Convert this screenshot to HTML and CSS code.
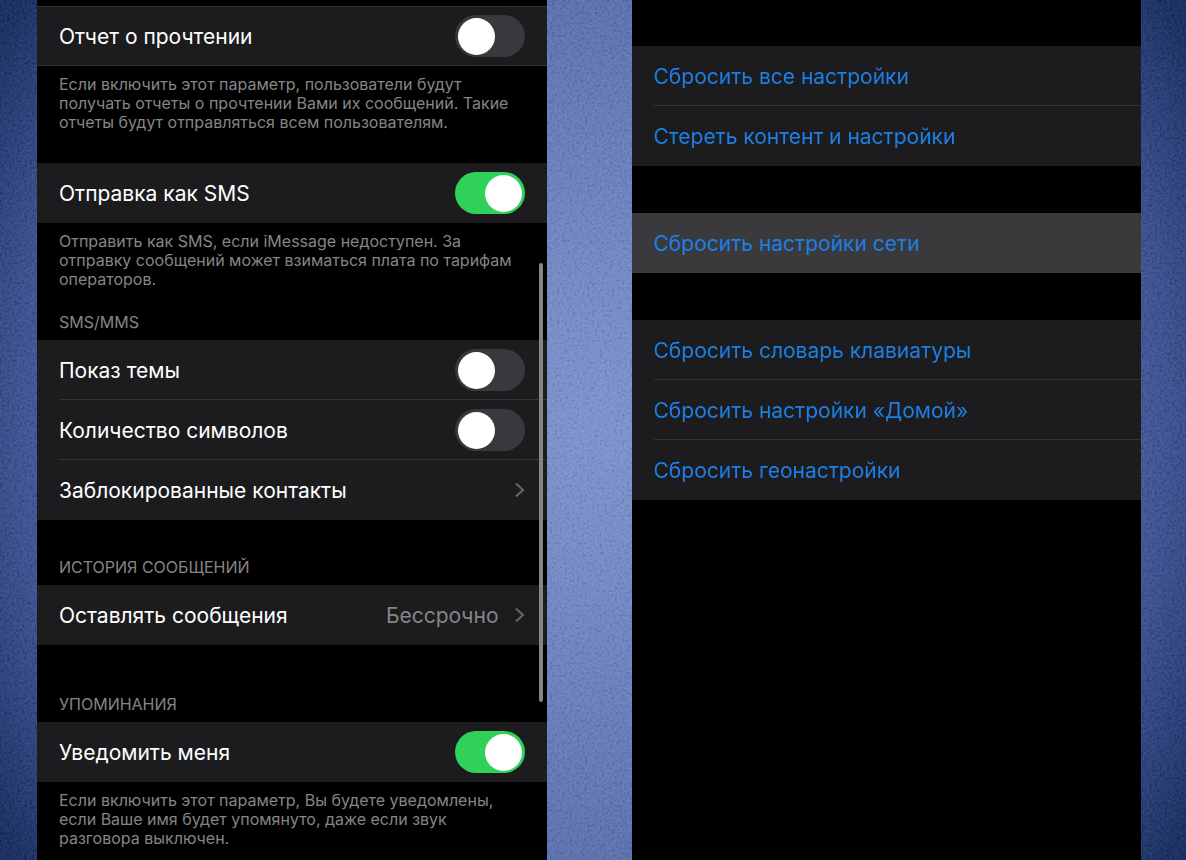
FILE: index.html
```
<!DOCTYPE html>
<html lang="ru">
<head>
<meta charset="utf-8">
<meta name="viewport" content="width=device-width, initial-scale=1">
<title>Настройки сообщений и сброс</title>
<link rel="stylesheet" href="styles.css">
</head>
<body>
<main class="board">
  <svg class="grain" aria-hidden="true">
    <filter id="grain"><feTurbulence type="fractalNoise" baseFrequency="0.4" numOctaves="2" seed="4"/><feColorMatrix type="matrix" values="2 0 0 0 -0.6  2 0 0 0 -0.6  2 0 0 0 -0.6  0 0 0 0 1"/></filter>
    <rect width="100%" height="100%" filter="url(#grain)"/>
  </svg>
  <section class="panel panel-messages" aria-label="Сообщения">
    <div class="group outlined">
      <label class="row"><span>Отчет о прочтении</span><input class="switch" type="checkbox" role="switch"></label>
    </div>
    <p class="note note-spaced">Если включить этот параметр, пользователи будут<br>получать отчеты о прочтении Вами их сообщений. Такие<br>отчеты будут отправляться всем пользователям.</p>
    <div class="group">
      <label class="row"><span>Отправка как SMS</span><input class="switch" type="checkbox" role="switch" checked></label>
    </div>
    <p class="note">Отправить как SMS, если iMessage недоступен. За<br>отправку сообщений может взиматься плата по тарифам<br>операторов.</p>
    <h2 class="heading">SMS/MMS</h2>
    <div class="group">
      <label class="row"><span>Показ темы</span><input class="switch" type="checkbox" role="switch"></label>
      <label class="row"><span>Количество символов</span><input class="switch" type="checkbox" role="switch"></label>
      <button class="row" type="button"><span>Заблокированные контакты</span><svg class="chevron" viewBox="0 0 11 16" aria-hidden="true"><path d="M2 1.500 9 8l-7 6.500"/></svg></button>
    </div>
    <h2 class="heading heading-history">История сообщений</h2>
    <div class="group">
      <button class="row" type="button"><span>Оставлять сообщения</span><span class="value">Бессрочно</span><svg class="chevron" viewBox="0 0 11 16" aria-hidden="true"><path d="M2 1.500 9 8l-7 6.500"/></svg></button>
    </div>
    <h2 class="heading heading-mentions">Упоминания</h2>
    <div class="group">
      <label class="row"><span>Уведомить меня</span><input class="switch" type="checkbox" role="switch" checked></label>
    </div>
    <p class="note">Если включить этот параметр, Вы будете уведомлены,<br>если Ваше имя будет упомянуто, даже если звук<br>разговора выключен.</p>
    <div class="scrollbar" aria-hidden="true"></div>
  </section>
  <section class="panel panel-reset" aria-label="Сброс">
    <div class="group">
      <button class="row action" type="button">Сбросить все настройки</button>
      <button class="row action" type="button">Стереть контент и настройки</button>
    </div>
    <div class="group">
      <button class="row action pressed" type="button">Сбросить настройки сети</button>
    </div>
    <div class="group">
      <button class="row action" type="button">Сбросить словарь клавиатуры</button>
      <button class="row action" type="button">Сбросить настройки «Домой»</button>
      <button class="row action" type="button">Сбросить геонастройки</button>
    </div>
  </section>
</main>
</body>
</html>
```

FILE: styles.css
```
* { box-sizing: border-box; }

body {
  margin: 0;
  background: #22366a;
  color: #fff;
  font-family: Inter, "Liberation Sans", sans-serif;
}

.board {
  position: relative;
  display: grid;
  grid-template-columns: 1fr 1fr;
  gap: 85px;
  min-height: 100vh;
  padding: 0 45px 0 37px;
  background: radial-gradient(ellipse 700px 740px at 50% 50%, #7c92cb 0%, #7389c3 20%, #5b70ac 58%, #3c5290 82%, #263b72 94%, #1b2f5f 100%);
}

/* Paper texture over the backdrop; panels sit above it */
.grain {
  position: absolute;
  inset: 0;
  width: 100%;
  height: 100%;
  opacity: 0.2;
  mix-blend-mode: soft-light;
}

.panel {
  position: relative;
  background: #000;
}

.panel-messages { padding-top: 6px; }

.panel-reset {
  display: flex;
  flex-direction: column;
  gap: 47px;
  padding-top: 46px;
}

.group { background: #1c1c1e; }

.row {
  position: relative;
  display: flex;
  align-items: center;
  width: 100%;
  height: 60px;
  margin: 0;
  padding: 0 22px;
  border: 0;
  background: none;
  color: inherit;
  font: inherit;
  font-size: 21px;
  text-align: left;
  gap: 15px;
}

.row > span:first-child { flex: 1; }

.row + .row::before {
  content: "";
  position: absolute;
  top: -1px;
  right: 0;
  left: 22px;
  border-top: 1px solid #343437;
}

.outlined {
  box-shadow: inset 0 1px #343437, inset 0 -1px #343437;
}

.action { color: #1d7fe5; }
.pressed { background: #3a3a3c; }
.value { color: #858587; }

.note {
  margin: 0;
  padding: 9px 22px 0;
  color: #858587;
  font-size: 16px;
  line-height: 19px;
}

.note-spaced { padding-bottom: 31px; }

.heading {
  margin: 0;
  padding: 23px 22px 8px;
  color: #858587;
  font-size: 16px;
  font-weight: 400;
  line-height: 20px;
  text-transform: uppercase;
}

.heading-history { padding-top: 37px; }
.heading-mentions { padding-top: 49px; }

.switch {
  appearance: none;
  display: flex;
  align-items: center;
  flex: none;
  width: 70px;
  height: 42px;
  margin: 0;
  padding: 3px;
  border-radius: 21px;
  background: #39393d;
}

.switch::before {
  content: "";
  width: 37px;
  height: 37px;
  border-radius: 50%;
  background: #fff;
}

.switch:checked {
  justify-content: flex-end;
  background: #30d158;
}

.chevron {
  flex: none;
  width: 11px;
  height: 16px;
  fill: none;
  stroke: #68686b;
  stroke-width: 2;
}

.scrollbar {
  position: absolute;
  top: 263px;
  right: 4px;
  width: 4px;
  height: 439px;
  border-radius: 2px;
  background: #858586;
}
```
